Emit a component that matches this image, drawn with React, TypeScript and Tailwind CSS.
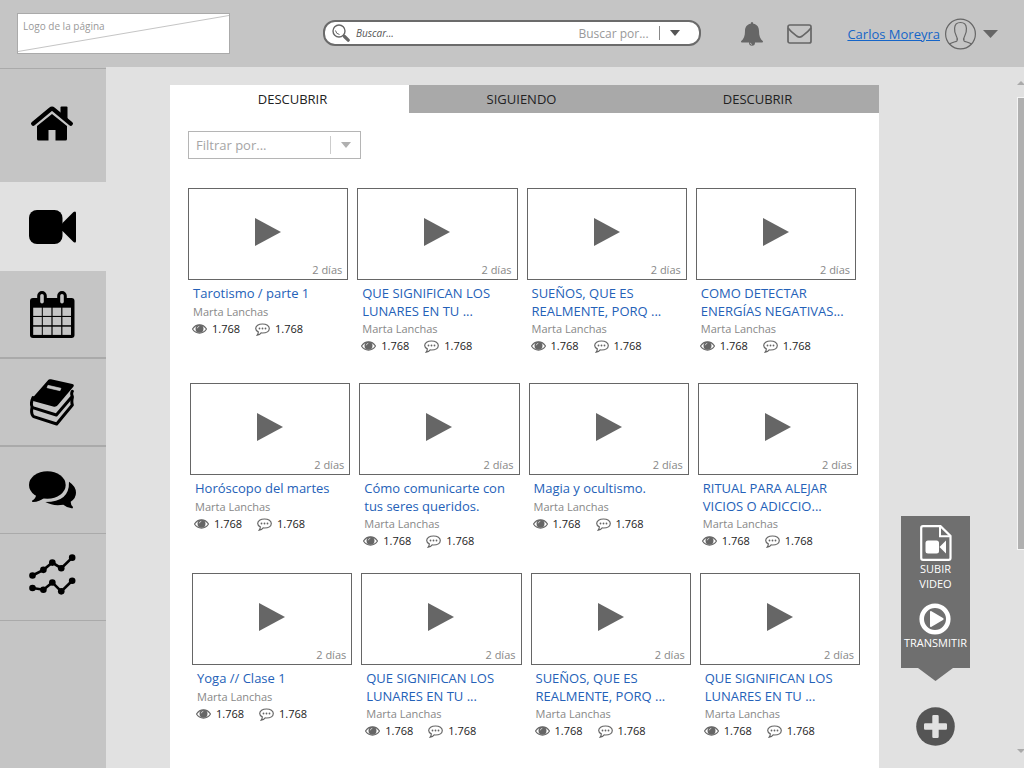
import React from "react";

type Video = { title: string[] };

const SIGNIFICAN = ["QUE SIGNIFICAN LOS", "LUNARES EN TU ..."];
const SUENOS = ["SUEÑOS, QUE ES", "REALMENTE, PORQ ..."];

const rows: { className: string; videos: Video[] }[] = [
  {
    className: "h-[195px] pl-[18px] pr-[23px]",
    videos: [
      { title: ["Tarotismo / parte 1"] },
      { title: SIGNIFICAN },
      { title: SUENOS },
      { title: ["COMO DETECTAR", "ENERGÍAS NEGATIVAS..."] },
    ],
  },
  {
    className: "h-[190px] pl-5 pr-[21px]",
    videos: [
      { title: ["Horóscopo del martes"] },
      { title: ["Cómo comunicarte con", "tus seres queridos."] },
      { title: ["Magia y ocultismo."] },
      { title: ["RITUAL PARA ALEJAR", "VICIOS O ADICCIO..."] },
    ],
  },
  {
    className: "h-[190px] pl-[22px] pr-[19px]",
    videos: [
      { title: ["Yoga // Clase 1"] },
      { title: SIGNIFICAN },
      { title: SUENOS },
      { title: SIGNIFICAN },
    ],
  },
];

function HomeIcon() {
  return (
    <svg width="42" height="35" viewBox="0 0 42 35" aria-hidden="true">
      <path d="M29.5 8V1.5q0-1 1-1h5q1 0 1 1V15z" />
      <path d="M2.3 17.6 19.5 3.4q1.5-1.2 3 0L39.7 17.6" fill="none" stroke="#000" strokeWidth="4.4" strokeLinecap="round" />
      <path d="M6 20 21 8l15 12v13q0 1.500-1.500 1.500H24.500V24h-7v10.500H7.500Q6 34.500 6 33z" />
    </svg>
  );
}

function CameraIcon() {
  return (
    <svg width="47" height="34" viewBox="0 0 47 34" aria-hidden="true">
      <rect width="33.500" height="34" rx="8" />
      <path d="M33 13.500 44.500 2q2.500-1.500 2.500 1v28q0 2.500-2.500 1L33 20.500z" />
    </svg>
  );
}

function CalendarIcon() {
  const cols = [3.2, 12.8, 22.6, 32.4];
  const lines = [16.7, 26, 35.700];
  return (
    <svg width="45" height="47" viewBox="0 0 45 47" aria-hidden="true">
      <rect y="7" width="44.500" height="40" rx="3" />
      {lines.map((y) => cols.map((x) => <rect key={`${x}-${y}`} x={x} y={y} width="8.600" height="8.200" fill="#c5c5c5" />))}
      {[12, 32].map((x) => (
        <rect key={x} x={x - 3.300} y="1.500" width="6.600" height="12.500" rx="3.300" fill="#c5c5c5" stroke="#000" strokeWidth="3" />
      ))}
    </svg>
  );
}

function BooksIcon() {
  return (
    <svg width="44" height="47" viewBox="0 0 132 141" aria-hidden="true">
      <path d="M54 4q3-5 9-3l64 14q7 2 3 8L83 79q-4 5-11 4L12 67Q3 64 8 56z" />
      <g fill="none" stroke="#000" strokeWidth="9" strokeLinejoin="round" strokeLinecap="round">
        <path d="M9 56Q0 76 8 86l71 22 48-56q-4-8 0-15" />
        <path d="M6 86q-4 20 5 27l69 22 47-57q-3-10 0-22" />
      </g>
      <path d="m54 19 39 9-3 7-39-9z" fill="#c5c5c5" stroke="#c5c5c5" strokeWidth="2" strokeLinejoin="round" />
    </svg>
  );
}

function ChatIcon() {
  return (
    <svg width="47" height="38" viewBox="0 0 141 112" aria-hidden="true">
      <ellipse cx="55" cy="41" rx="55" ry="41" />
      <path d="M22 68q-1 14-13 20-1 4 3 4 20-1 34-13z" />
      <path d="M120 31q21 14 21 33 0 17-16 27 0 9 7 16 0 5-4 4-16-3-25-11-31 5-54-8 73 0 71-61z" />
    </svg>
  );
}

function ChartIcon() {
  const series = [
    [[10, 65], [43, 48], [70, 26], [97, 43], [130, 11]],
    [[10, 103], [43, 108], [70, 86], [97, 113], [130, 81]],
  ];
  return (
    <svg width="47" height="41" viewBox="0 0 141 124" aria-hidden="true">
      {series.map((pts, i) => (
        <g key={i}>
          <polyline points={pts.map((p) => p.join(",")).join(" ")} fill="none" stroke="#000" strokeWidth="8" />
          {pts.map(([x, y]) => <circle key={x} cx={x} cy={y} r="10" />)}
        </g>
      ))}
    </svg>
  );
}

function Header() {
  return (
    <header className="flex h-[67px] items-center bg-[#c5c5c5] pl-[17px] pr-[26px]">
      <div className="relative h-[41px] w-[213px] shrink-0 border border-[#aaaaaa] bg-white">
        <svg className="absolute inset-0 h-full w-full" viewBox="0 0 211 39" preserveAspectRatio="none" aria-hidden="true">
          <path d="M0 37.500 211 1.500" stroke="#c5c5c5" />
        </svg>
        <span className="relative block pl-[5px] pt-1 text-[10px] leading-4 text-[#999999]">Logo de la página</span>
      </div>

      <form className="mb-px ml-[93px] flex h-[26px] min-w-0 flex-1 items-center rounded-xl border-2 border-[#6b6b6b] bg-white pl-[7px]">
        <svg className="shrink-0" width="18" height="18" viewBox="0 0 18 18" fill="none" stroke="#666" aria-hidden="true">
          <circle cx="7" cy="7" r="6" strokeWidth="1.400" />
          <path d="M3.500 6.500Q4 10 7.500 10.500" />
          <path d="m11.300 11.300 1.500 1.500" strokeWidth="1.500" />
          <path d="m12.500 12.500 3.700 3.700" strokeWidth="3.200" strokeLinecap="round" />
        </svg>
        <input
          type="text"
          aria-label="Buscar"
          placeholder="Buscar..."
          className="ml-1.5 min-w-0 flex-1 bg-transparent text-[10px] italic leading-4 outline-none placeholder:text-[#555555]"
        />
        <div className="relative w-[121px] shrink-0">
          <select aria-label="Buscar por" className="block h-[22px] w-full appearance-none bg-transparent pt-px text-xs text-[#999999] outline-none">
            <option>Buscar por...</option>
          </select>
          <span className="pointer-events-none absolute inset-y-0 right-[19px] flex items-center gap-2.5">
            <span className="h-3.5 w-px bg-[#888888]" />
            <svg width="10" height="6" viewBox="0 0 10 6" fill="#555" aria-hidden="true"><path d="M0 0h10L5 6z" /></svg>
          </span>
        </div>
      </form>

      <div className="ml-10 flex shrink-0 items-center">
        <button type="button" aria-label="Notificaciones">
          <svg width="22" height="24" viewBox="0 0 22 24" fill="#666" className="block" aria-hidden="true">
            <path d="M11 0q1.300 0 1.300 1.700C16.500 2.400 18 5.500 18 9c0 5 1.300 8 4 10.300 0 .8-.4 1.200-1.200 1.200H14a3 3.200 0 0 1-6 0H1.200C.4 20.500 0 20.100 0 19.300 2.700 17 4 14 4 9c0-3.500 1.500-6.600 5.700-7.300Q9.700 0 11 0z" />
            <path d="M9.300 20.800q.2 1.600 1.700 1.700" fill="none" stroke="#c5c5c5" strokeWidth=".7" />
          </svg>
        </button>
        <button type="button" aria-label="Mensajes" className="ml-6 pt-px">
          <svg width="25" height="20" viewBox="0 0 25 20" fill="none" stroke="#666" strokeWidth="1.700" className="block" aria-hidden="true">
            <rect x="1" y="1" width="23" height="18" rx="1.800" />
            <path d="M1 4c3 4 6 6 9 8.200q2.500 1.900 5 0C18 10 21 8 24 4" />
          </svg>
        </button>
        <a href="#perfil" className="ml-[35px] text-[13px] leading-5 text-[#1565c8] underline">Carlos Moreyra</a>
        <button type="button" aria-label="Menú de usuario" className="ml-[5px] flex items-center gap-[7px]">
          <svg width="31" height="32" viewBox="0 0 31 32" fill="none" stroke="#666" strokeWidth="1.200" aria-hidden="true">
            <circle cx="15.500" cy="16" r="14.900" />
            <path d="M4.500 26c3-2 6.500-2 7.500-3.200.7-1.500.2-3.300-.8-5-1.200-2-1.800-4.500-1.600-7.500.2-4 2.300-5.800 5.900-5.800s5.700 1.800 5.900 5.800c.2 3-.4 5.500-1.600 7.500-1 1.700-1.500 3.500-.8 5 1 1.200 4.500 1.200 7.500 3.200" />
          </svg>
          <svg width="15" height="8" viewBox="0 0 15 8" fill="#666" aria-hidden="true"><path d="M0 0h15L7.500 8z" /></svg>
        </button>
      </div>
    </header>
  );
}

const navItems = [
  { label: "Inicio", icon: <HomeIcon />, className: "h-[113px] bg-[#c5c5c5] pb-1" },
  { label: "Videos", icon: <CameraIcon />, className: "h-[89px]" },
  { label: "Calendario", icon: <CalendarIcon />, className: "h-[88px] border-b-2 bg-[#c5c5c5]" },
  { label: "Cursos", icon: <BooksIcon />, className: "h-[88px] border-b-2 bg-[#c5c5c5]" },
  { label: "Mensajes", icon: <ChatIcon />, className: "h-[87px] border-b bg-[#c5c5c5]" },
  { label: "Estadísticas", icon: <ChartIcon />, className: "h-[87px] border-b bg-[#c5c5c5] pb-1.5" },
];

function Sidebar() {
  return (
    <nav className="flex w-[106px] shrink-0 flex-col">
      <div className="h-0.5 border-b border-[#aaaaaa] bg-[#c5c5c5]" />
      {navItems.map((item) => (
        <a key={item.label} href="#" aria-label={item.label} className={`flex items-center justify-center border-[#aaaaaa] pr-0.5 ${item.className}`}>
          {item.icon}
        </a>
      ))}
      <div className="flex-1 bg-[#c5c5c5]" />
    </nav>
  );
}

function VideoCard({ video }: { video: Video }) {
  return (
    <article>
      <button type="button" aria-label="Reproducir" className="relative flex h-[92px] w-full items-center justify-center border border-[#666666] pb-1">
        <svg width="26" height="28" viewBox="0 0 26 28" fill="#666" aria-hidden="true"><path d="M0 0 26 14 0 28z" /></svg>
        <span className="absolute bottom-0 right-[5px] text-[11px] leading-[18px] text-[#888888]">2 días</span>
      </button>
      <div className="pl-[5px] pt-1">
        <a href="#" className={`block text-[13px] leading-[18px] text-[#2461b8] ${video.title.length === 1 ? "pb-px" : ""}`}>
          {video.title.map((line) => <span key={line} className="block whitespace-nowrap">{line}</span>)}
        </a>
        <p className="text-[11px] leading-[17px] text-[#888888]">Marta Lanchas</p>
        <div className="flex items-center text-[11px] leading-[18px] text-[#222222]">
          <svg width="15" height="10" viewBox="0 0 15 10" className="-ml-px" aria-hidden="true">
            <path d="M.5 5C4-.6 11-.6 14.500 5 11 10.400 4 10.400.5 5z" fill="#fff" stroke="#666" strokeWidth="1.200" />
            <circle cx="7.500" cy="4.700" r="4" fill="#666" />
            <path d="M5.300 4.300Q5.500 2.500 7.300 2.300" fill="none" stroke="#ddd" strokeWidth=".8" />
          </svg>
          <span className="ml-[5px] w-[43px]">1.768</span>
          <svg width="15" height="13" viewBox="0 0 15 13" aria-hidden="true">
            <path d="M7.500 1c4 0 6.800 1.900 6.800 4.500S11.500 10 7.500 10l-1.300-.1q-1.500 2-4 2.300 1.300-1.800 1.100-3.300C1.700 8.100.7 6.900.7 5.500.7 2.900 3.500 1 7.500 1z" fill="none" stroke="#666" strokeWidth="1.200" />
            <circle cx="4.500" cy="5.500" r=".9" fill="#666" />
            <circle cx="7.500" cy="5.500" r=".9" fill="#666" />
            <circle cx="10.500" cy="5.500" r=".9" fill="#666" />
          </svg>
          <span className="ml-[5px]">1.768</span>
        </div>
      </div>
    </article>
  );
}

function Dock() {
  return (
    <div className="mb-[22px] flex w-[69px] flex-col items-center self-end">
      <div className="flex w-full flex-col items-center bg-[#6f6f6f] pb-[18px] pt-[9px] text-[11px] leading-[15px] text-white">
        <button type="button" className="flex flex-col items-center text-center">
          <svg width="32" height="36" viewBox="0 0 32 36" aria-hidden="true">
            <path d="M3 1.200h17.500L30.500 11v22q0 1.800-1.800 1.800H3q-1.800 0-1.800-1.800V3Q1.200 1.200 3 1.200z" fill="none" stroke="#fff" strokeWidth="2.200" />
            <path d="M20 1.500V11.300h10" fill="none" stroke="#fff" strokeWidth="2" />
            <rect x="5.500" y="15.500" width="13.500" height="13" rx="2.500" fill="#fff" />
            <path d="M19.500 22 26 15.500v13z" fill="#fff" />
          </svg>
          <span>SUBIR<br />VIDEO</span>
        </button>
        <button type="button" className="mt-3 flex flex-col items-center">
          <svg width="32" height="32" viewBox="0 0 32 32" aria-hidden="true">
            <circle cx="16" cy="16" r="13.300" fill="none" stroke="#fff" strokeWidth="4.600" />
            <path d="M11 9q0-1.500 1.500-.8l11.500 6.800q1.500 1 0 2l-11.500 6.800Q11 24.500 11 23z" fill="#fff" />
          </svg>
          <span>TRANSMITIR</span>
        </button>
      </div>
      <svg width="35" height="13" viewBox="0 0 35 13" fill="#6f6f6f" aria-hidden="true"><path d="M0 0h35L17.500 13z" /></svg>
      <button type="button" aria-label="Añadir" className="mt-[26px]">
        <svg width="39" height="39" viewBox="0 0 39 39" className="block" aria-hidden="true">
          <circle cx="19.500" cy="19.500" r="19.300" fill="#555" />
          <path d="M17.500 8h4q1.200 0 1.200 1.200v7.100h7.100q1.200 0 1.200 1.200v4q0 1.200-1.200 1.200h-7.100v7.100q0 1.200-1.200 1.200h-4q-1.200 0-1.200-1.200v-7.100H9.200Q8 22.700 8 21.500v-4q0-1.200 1.200-1.200h7.100V9.200Q16.300 8 17.500 8z" fill="#e1e1e1" />
        </svg>
      </button>
    </div>
  );
}

function ScrollRail() {
  return (
    <div className="ml-auto flex w-[7px] flex-col overflow-hidden pb-[15px] pt-3.5" aria-hidden="true">
      <svg width="7" height="4" viewBox="0 0 7 4" fill="#aaa"><path d="M0 4 4 0l4 4z" /></svg>
      <div className="mt-3 h-[453px] border border-r-0 border-[#f4f4f4] bg-[#b0b0b0]" />
      <svg className="mt-auto" width="7" height="4" viewBox="0 0 7 4" fill="#aaa"><path d="M0 0h8L4 4z" /></svg>
    </div>
  );
}

export default function App() {
  return (
    <div className="flex min-h-screen flex-col bg-[#e1e1e1] font-['Open_Sans',sans-serif]">
      <Header />
      <div className="flex flex-1">
        <Sidebar />
        <main className="ml-16 mt-[18px] min-w-0 flex-1 bg-white">
          <div role="tablist" className="flex h-7 text-[13px] text-[#222222]">
            <button type="button" role="tab" aria-selected="true" className="w-[239px] pl-1.5 pt-px">DESCUBRIR</button>
            <button type="button" role="tab" aria-selected="false" className="w-[225px] bg-[#a9a9a9] pt-px">SIGUIENDO</button>
            <button type="button" role="tab" aria-selected="false" className="flex-1 bg-[#a9a9a9] pl-0.5 pt-px">DESCUBRIR</button>
          </div>
          <div className="relative ml-[18px] mt-[18px] w-[173px]">
            <select aria-label="Filtrar por" className="block h-7 w-full appearance-none border border-[#b5b5b5] bg-white pl-[7px] pt-0.5 text-[13px] text-[#a5a5a5] outline-none">
              <option>Filtrar por...</option>
            </select>
            <span className="pointer-events-none absolute inset-y-0 right-2.5 flex items-center gap-2.5">
              <span className="h-[18px] w-px bg-[#cccccc]" />
              <svg width="10" height="6" viewBox="0 0 10 6" fill="#b0b0b0" aria-hidden="true"><path d="M0 0h10L5 6z" /></svg>
            </span>
          </div>
          <div className="mt-[29px]">
            {rows.map((row, r) => (
              <section key={r} className={`grid grid-cols-4 gap-[9px] ${row.className}`}>
                {row.videos.map((video, c) => <VideoCard key={c} video={video} />)}
              </section>
            ))}
          </div>
        </main>
        <aside className="flex w-[145px] shrink-0 pl-[22px]">
          <Dock />
          <ScrollRail />
        </aside>
      </div>
    </div>
  );
}
